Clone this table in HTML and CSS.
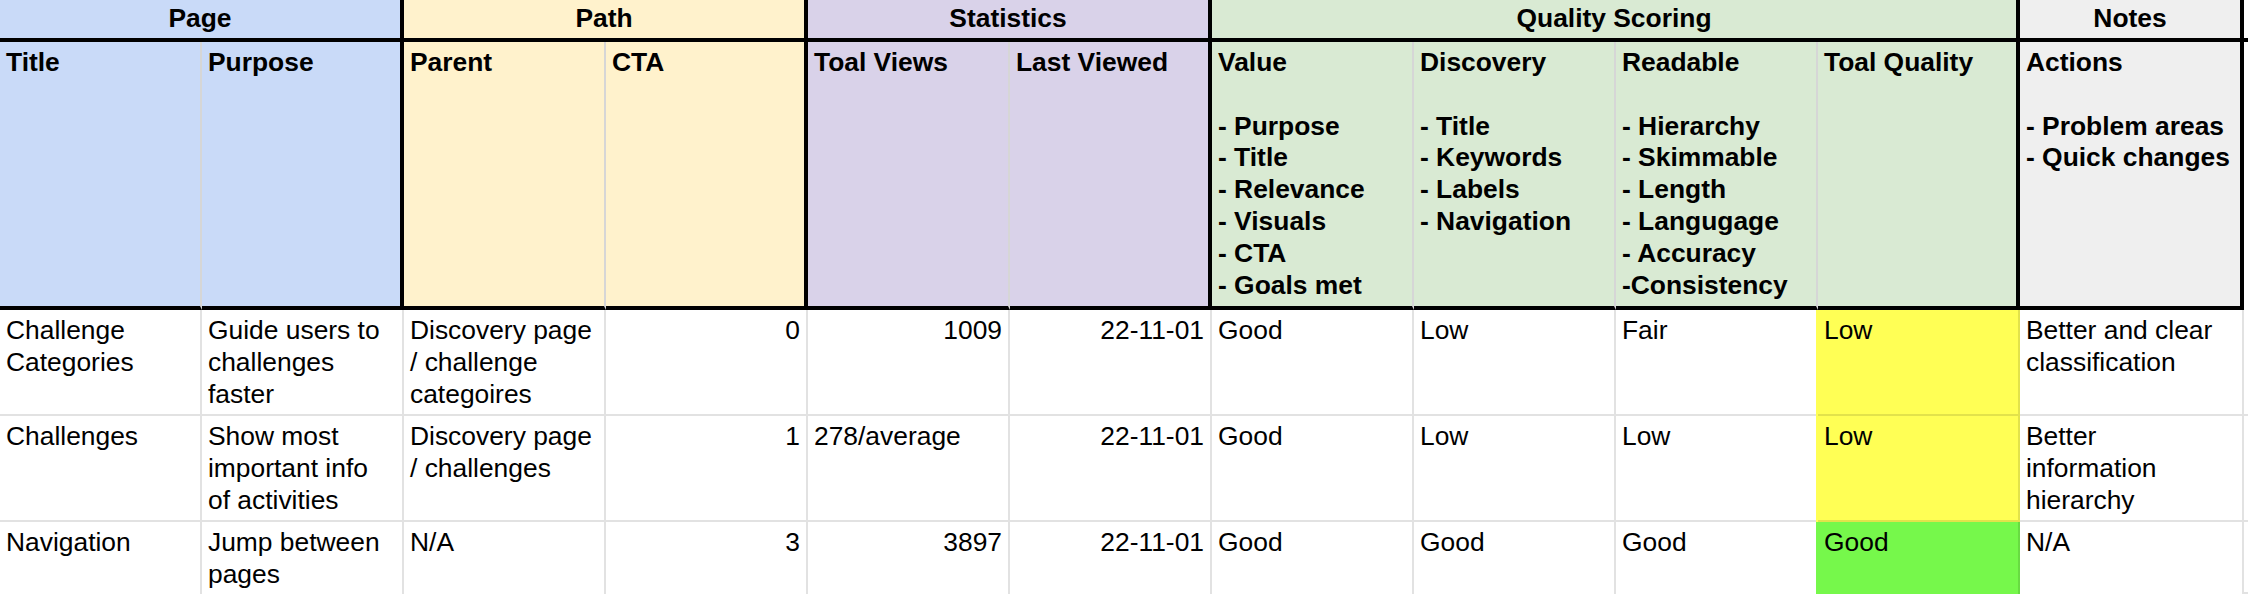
FILE: index.html
```html
<!DOCTYPE html>
<html lang="en">
<head>
<meta charset="utf-8">
<title>Page quality audit</title>
<link rel="stylesheet" href="styles.css">
</head>
<body>
<div class="sheet">
  <!-- group header row -->
  <div class="cell group page span2">Page</div>
  <div class="cell group path span2">Path</div>
  <div class="cell group stats span2">Statistics</div>
  <div class="cell group quality span4">Quality Scoring</div>
  <div class="cell group notes">Notes</div>
  <div class="filler top"></div>

  <!-- column header row -->
  <div class="cell head page">Title</div>
  <div class="cell head page end">Purpose</div>
  <div class="cell head path">Parent</div>
  <div class="cell head path end">CTA</div>
  <div class="cell head stats">Toal Views</div>
  <div class="cell head stats end">Last Viewed</div>
  <div class="cell head quality">Value<br><br>- Purpose<br>- Title<br>- Relevance<br>- Visuals<br>- CTA<br>- Goals met</div>
  <div class="cell head quality">Discovery<br><br>- Title<br>- Keywords<br>- Labels<br>- Navigation</div>
  <div class="cell head quality">Readable<br><br>- Hierarchy<br>- Skimmable<br>- Length<br>- Langugage<br>- Accuracy<br>-Consistency</div>
  <div class="cell head quality end">Toal Quality</div>
  <div class="cell head notes end">Actions<br><br>- Problem areas<br>- Quick changes</div>
  <div class="filler"></div>

  <!-- data rows -->
  <div class="cell">Challenge Categories</div>
  <div class="cell">Guide users to challenges faster</div>
  <div class="cell">Discovery page / challenge categoires</div>
  <div class="cell num">0</div>
  <div class="cell num">1009</div>
  <div class="cell num">22-11-01</div>
  <div class="cell">Good</div>
  <div class="cell">Low</div>
  <div class="cell">Fair</div>
  <div class="cell score low">Low</div>
  <div class="cell note">Better and clear classification</div>
  <div class="filler row"></div>

  <div class="cell">Challenges</div>
  <div class="cell">Show most important info of activities</div>
  <div class="cell">Discovery page / challenges</div>
  <div class="cell num">1</div>
  <div class="cell">278/average</div>
  <div class="cell num">22-11-01</div>
  <div class="cell">Good</div>
  <div class="cell">Low</div>
  <div class="cell">Low</div>
  <div class="cell score low">Low</div>
  <div class="cell note">Better information hierarchy</div>
  <div class="filler row"></div>

  <div class="cell">Navigation</div>
  <div class="cell">Jump between pages</div>
  <div class="cell">N/A</div>
  <div class="cell num">3</div>
  <div class="cell num">3897</div>
  <div class="cell num">22-11-01</div>
  <div class="cell">Good</div>
  <div class="cell">Good</div>
  <div class="cell">Good</div>
  <div class="cell score good">Good</div>
  <div class="cell note">N/A</div>
  <div class="filler row"></div>
</div>
</body>
</html>
```

FILE: styles.css
```css
html, body {
  margin: 0;
  padding: 0;
  background: #ffffff;
}

body {
  width: 2248px;
  height: 594px;
  overflow: hidden;
  font-family: "Liberation Sans", Arial, sans-serif;
  font-size: 26.4px;
  line-height: 31.8px;
  color: #000000;
}

.sheet {
  display: grid;
  grid-template-columns: repeat(10, 202px) 224px 4px;
  grid-template-rows: 42px 268px 106px 106px 72px;
}

.cell {
  box-sizing: border-box;
  padding: 5px 6px 0 6px;
  border-right: 2px solid rgba(0, 0, 0, 0.115);
  border-bottom: 2px solid rgba(0, 0, 0, 0.115);
  overflow: hidden;
  white-space: normal;
}

/* last visible row is cut by the frame: no bottom gridline */
.sheet > :nth-last-child(-n+12) {
  border-bottom: 0;
}

.span2 { grid-column: span 2; }
.span4 { grid-column: span 4; }

.group {
  padding-top: 3px;
  text-align: center;
  font-weight: bold;
  border-right: 4px solid #000000;
  border-bottom: 4px solid #000000;
}

.head {
  font-weight: bold;
  border-right: 2px solid #d6d6d6;
  border-bottom: 4px solid #000000;
}

.head.end {
  border-right: 4px solid #000000;
}

.page { background: #c9daf8; }
.path { background: #fff2cc; }
.stats { background: #d9d2e9; }
.quality { background: #d9ead3; }
.notes { background: #efefef; }

.num {
  text-align: right;
}

.note {
  padding-right: 14px;
}

.score.low {
  background: #ffff55;
  box-shadow: -2px 0 0 #ffff55;
}

.score.good {
  background: #76f84b;
  box-shadow: -2px 0 0 #76f84b;
}

.filler {
  box-sizing: border-box;
}

.filler.top {
  border-bottom: 4px solid #000000;
}

.filler.row {
  border-bottom: 2px solid rgba(0, 0, 0, 0.115);
}
```
